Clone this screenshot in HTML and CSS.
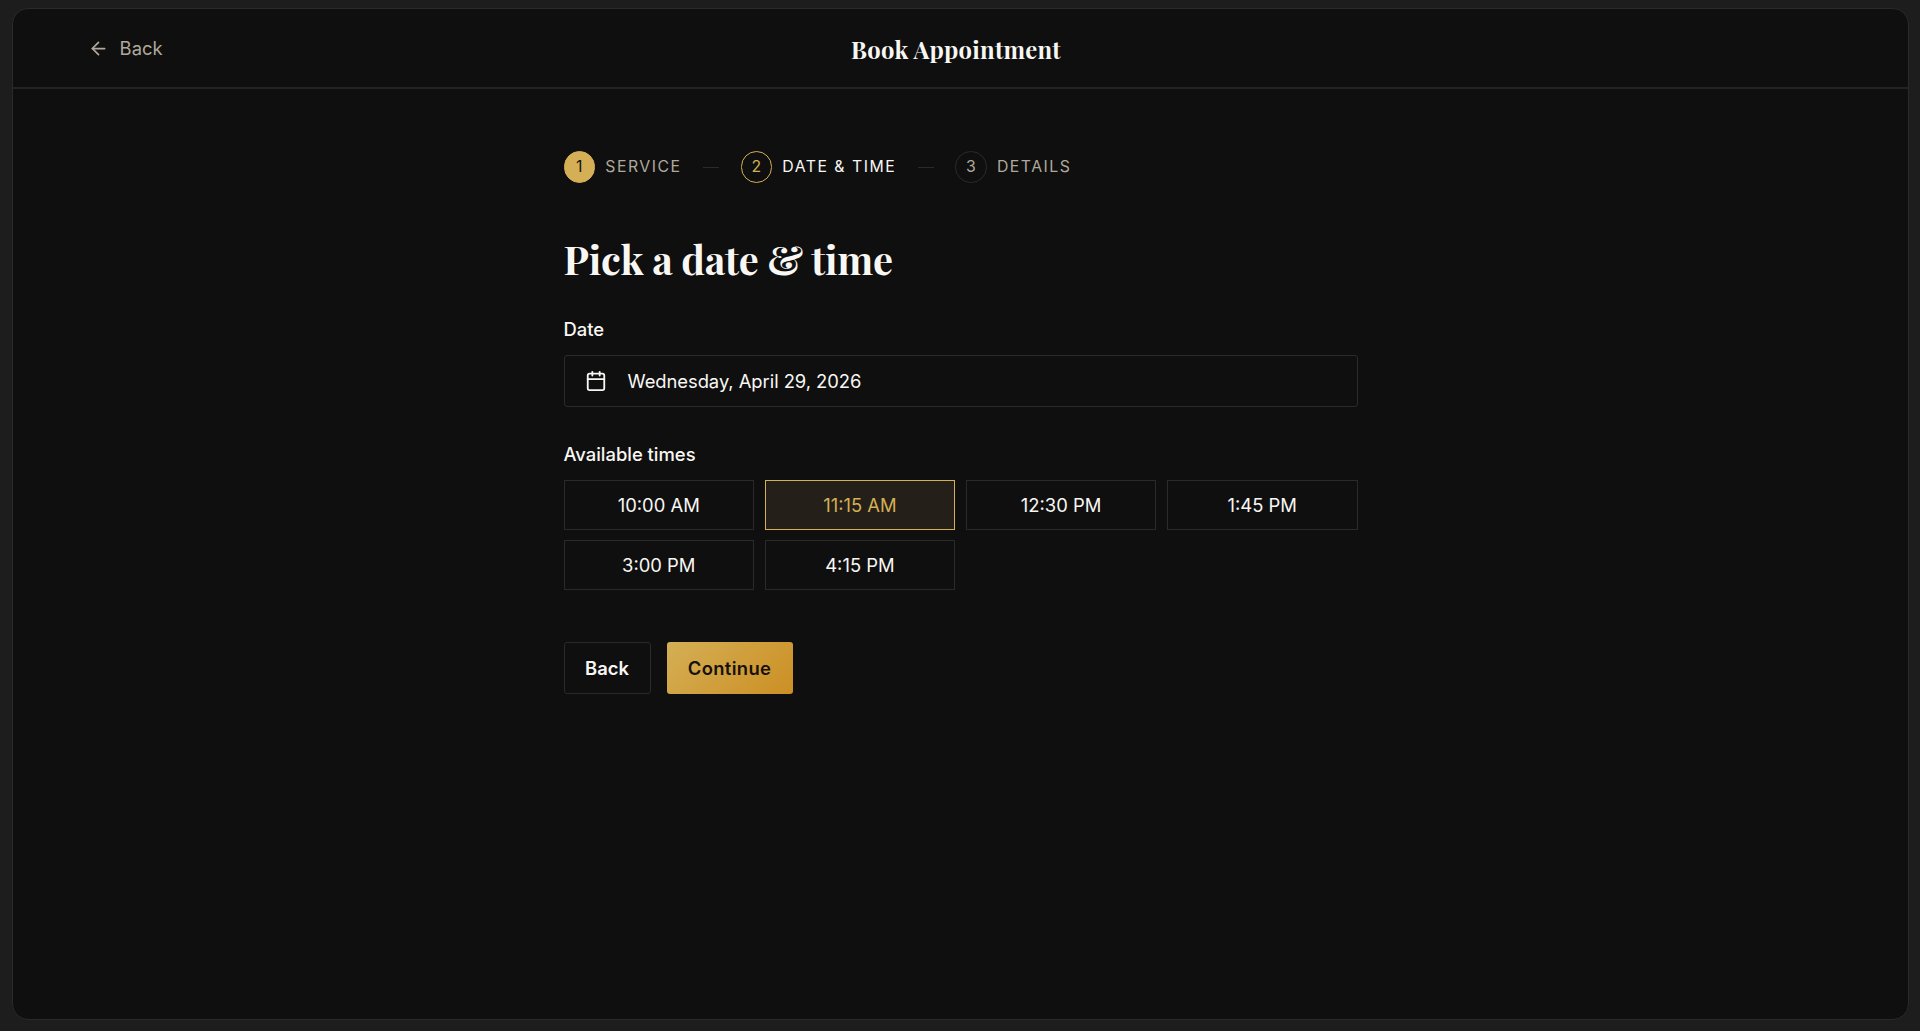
FILE: index.html
```html
<!DOCTYPE html>
<html lang="en">
<head>
  <meta charset="UTF-8">
  <title>Book Appointment</title>
  <link rel="stylesheet" href="styles.css">
</head>
<body>

  <div class="window">
    <header class="topbar">
      <a class="back-link" href="#">
        <svg viewBox="0 0 24 24"><path d="m12 19-7-7 7-7"/><path d="M19 12H5"/></svg>
        <span>Back</span>
      </a>
      <h1 class="title">Book Appointment</h1>
      <div></div>
    </header>

    <main class="content">
      <ol class="steps">
        <li class="step done"><span class="num">1</span><span>Service</span></li>
        <li class="line"></li>
        <li class="step current"><span class="num">2</span><span>Date &amp; Time</span></li>
        <li class="line"></li>
        <li class="step"><span class="num">3</span><span>Details</span></li>
      </ol>

      <h2 class="heading">Pick a date &amp; time</h2>

      <div class="label">Date</div>
      <button class="date-field">
        <svg viewBox="0 0 24 24"><path d="M8 2v4"/><path d="M16 2v4"/><rect width="18" height="18" x="3" y="4" rx="2"/><path d="M3 10h18"/></svg>
        <span>Wednesday, April 29, 2026</span>
      </button>

      <div class="label">Available times</div>
      <div class="times">
        <button class="time">10:00 AM</button>
        <button class="time selected">11:15 AM</button>
        <button class="time">12:30 PM</button>
        <button class="time">1:45 PM</button>
        <button class="time">3:00 PM</button>
        <button class="time">4:15 PM</button>
      </div>

      <div class="actions">
        <button class="btn">Back</button>
        <button class="btn primary">Continue</button>
      </div>
    </main>
  </div>

</body>
</html>
```
FILE: styles.css
```css
* {
  box-sizing: border-box;
}

body {
  margin: 0;
  height: 1031px;
  padding: 8px 11px 11px 12px;
  background: #1d1d1d;
  color: #f8f7f3;
  font-family: Inter, sans-serif;
  font-size: 18.4px;
  overflow: hidden;
}

button {
  font: inherit;
  color: inherit;
  background: none;
  border: 1px solid #2a2a2a;
  padding: 0;
}

svg {
  fill: none;
  stroke: currentColor;
  stroke-width: 2;
  stroke-linecap: round;
  stroke-linejoin: round;
}

.window {
  height: 100%;
  background: #0f0f0f;
  border: 1px solid #2a2a2a;
  border-radius: 16px;
}

.topbar {
  display: grid;
  grid-template-columns: 1fr auto 1fr;
  align-items: center;
  height: 80px;
  padding: 0 84px 0 75px;
  border-bottom: 2px solid #242424;
}

.back-link {
  display: flex;
  align-items: center;
  gap: 10.6px;
  color: #b0a99b;
  text-decoration: none;
}

.back-link svg {
  width: 21px;
  height: 21px;
}

.title {
  margin: 0;
  padding-top: 1px;
  font-family: "Playfair Display", "Liberation Serif", serif;
  font-size: 23.8px;
  font-weight: 700;
  letter-spacing: 0.25px;
}

.content {
  width: 794px;
  margin: 0 auto;
  padding-top: 62px;
}

.steps {
  display: flex;
  align-items: center;
  margin: 0;
  padding: 0;
  list-style: none;
  font-size: 15.8px;
  letter-spacing: 1.5px;
  text-transform: uppercase;
}

.step {
  display: flex;
  align-items: center;
  gap: 10.2px;
  color: #b0a99b;
}

.num {
  display: flex;
  align-items: center;
  justify-content: center;
  width: 31.6px;
  height: 31.6px;
  border: 1px solid #2a2a2a;
  border-radius: 50%;
  letter-spacing: 0;
}

.done .num {
  background: #d4af55;
  border-color: #d4af55;
  color: #0f0f0f;
}

.current {
  color: #f8f7f3;
}

.current .num {
  border-color: #d4af55;
  color: #d4af55;
}

.line {
  width: 16px;
  height: 1px;
  margin: 1px 21.5px 0;
  background: #2a2a2a;
}

.heading {
  margin: 52px 0 35px;
  font-family: "Playfair Display", "Liberation Serif", serif;
  font-size: 39.7px;
  font-weight: 700;
  line-height: 48px;
  letter-spacing: -0.25px;
}

.label {
  margin-bottom: 15px;
  font-weight: 500;
  line-height: 22px;
}

.date-field {
  display: flex;
  align-items: center;
  gap: 20.5px;
  width: 100%;
  height: 52px;
  margin-bottom: 36px;
  padding-left: 20.5px;
  border-radius: 3px;
  letter-spacing: -0.05px;
}

.date-field svg {
  width: 22px;
  height: 22px;
}

.times {
  display: grid;
  grid-template-columns: repeat(4, 1fr);
  grid-auto-rows: 50px;
  gap: 10px 10.6px;
}

.time.selected {
  background: #241f18;
  border-color: #d4af55;
  color: #d4af55;
}

.actions {
  display: flex;
  gap: 16px;
  margin-top: 52px;
}

.btn {
  width: 87px;
  height: 52px;
  border-radius: 3px;
  font-weight: 600;
}

.btn.primary {
  width: 126px;
  border: 0;
  background: linear-gradient(135deg, #d4af55, #cc8f24);
  color: #16120b;
  letter-spacing: 0.35px;
}
```
